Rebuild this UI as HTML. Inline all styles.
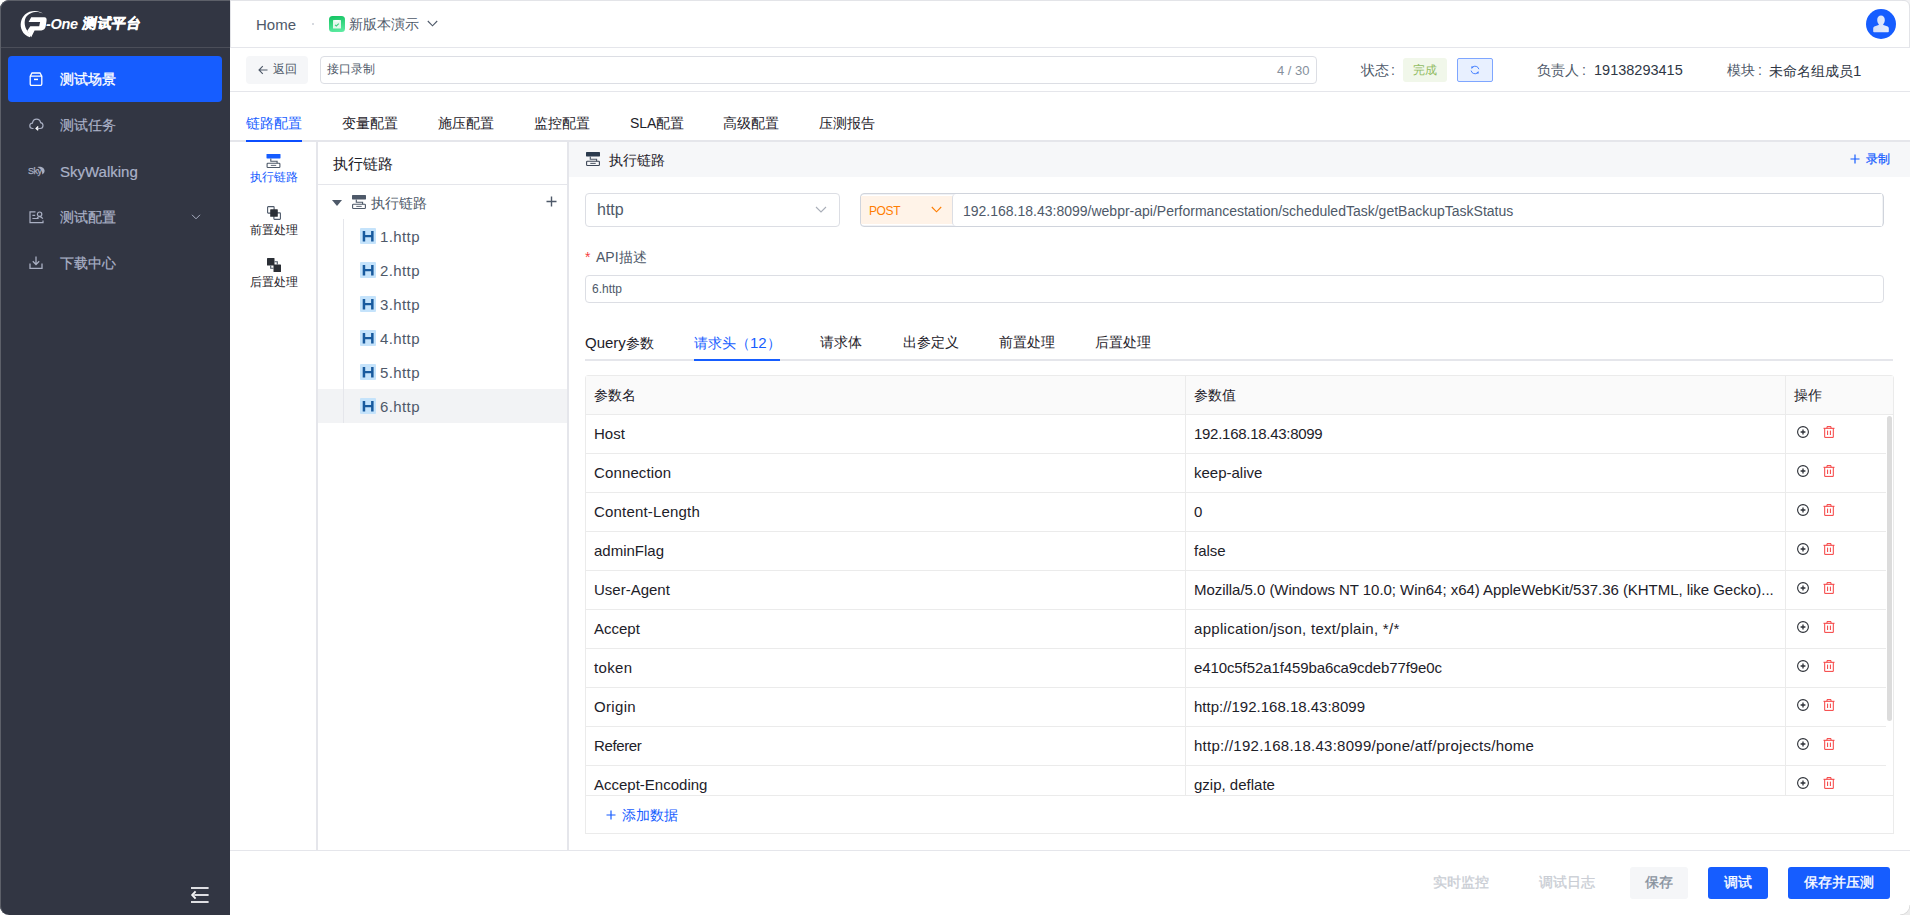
<!DOCTYPE html>
<html><head><meta charset="utf-8">
<style>
*{box-sizing:border-box;margin:0;padding:0}
html,body{width:1910px;height:915px;overflow:hidden;background:#fff;font-family:"Liberation Sans",sans-serif;}
.a{position:absolute}
.t{position:absolute;white-space:nowrap;line-height:1}
svg{position:absolute;overflow:visible}
/* sidebar */
#side{left:0;top:0;width:230px;height:915px;background:#323643;border-radius:9px 0 0 9px;}
#sideedge{left:0;top:0;width:230px;height:915px;border-top:1px solid #5d6069;border-left:1px solid #5d6069;border-radius:9px 0 0 9px;}
.mi{color:#abb2c8;font-size:14px;-webkit-text-stroke:0.2px currentColor}
/* borders */
.hl{position:absolute;height:1px;background:#e5e6eb}
.vl{position:absolute;width:1px;background:#e5e6eb}
</style></head><body>
<!-- ============ SIDEBAR ============ -->
<div id="side" class="a"></div>
<div id="sideedge" class="a"></div>
<div class="a" style="left:1px;top:47px;width:229px;height:1px;background:#4b4e59"></div>
<!-- logo -->
<svg style="left:17px;top:8px" width="33" height="32" viewBox="0 0 33 32">
  <path d="M25.9 5.4 C21.5 2.2 13 1.8 8 6.5 C3.6 10.5 2.6 17.5 5 22.5 C6.6 26 9.5 28.4 13 29.2 L14 26.2 C12.4 25.3 11.2 24.2 10.3 22.8 C7.6 19 6.8 13.5 8.8 9.5 C11.4 5.2 17.5 3.2 22.8 4.4 C24 4.6 25 5 25.9 5.4 Z" fill="#fff"/>
  <path d="M14.2 9.3 H27.3 Q30.2 9.5 29.5 13.2 L28.7 18.2 Q28 22.2 24.3 22.4 H17.6 L14.2 29.2 L10.3 22.8 L13.3 18.2 H22.2 L23.1 14 H11.6 Z" fill="#fff"/>
</svg>
<div id="logoOne" class="t" style="left:46px;top:17px;font-size:14.5px;font-weight:bold;font-style:italic;color:#fff;letter-spacing:-0.3px">-One</div>
<div id="logoCn" class="t" style="left:83px;top:16px;font-size:14px;font-weight:900;color:#fff;transform:skewX(-10deg);letter-spacing:0.5px;-webkit-text-stroke:0.5px #fff">测试平台</div>
<!-- active item -->
<div class="a" style="left:8px;top:56px;width:214px;height:46px;background:#165dff;border-radius:4px"></div>
<svg style="left:29px;top:72px" width="14" height="14" viewBox="0 0 14 14" fill="none" stroke="#fff" stroke-width="1.3">
  <path d="M1.2 4.2 L3 1 H11 L12.8 4.2 V12 Q12.8 13.3 11.5 13.3 H2.5 Q1.2 13.3 1.2 12 Z M1.2 4.2 H12.8"/>
  <path d="M5 7.4 H9" stroke-width="1.5"/>
</svg>
<div id="mi0" class="t mi" style="left:60px;top:72px;color:#fff;-webkit-text-stroke:0.35px #fff">测试场景</div>
<!-- item: 测试任务 -->
<svg style="left:29px;top:118px" width="15" height="13" viewBox="0 0 15 13" fill="none" stroke="#a9afc2" stroke-width="1.2">
  <path d="M4.5 10.5 H3.5 C1.8 10.5 0.8 9.3 0.8 7.8 C0.8 6.3 1.9 5.2 3.4 5.1 C3.9 2.6 5.5 1.2 7.6 1.2 C9.7 1.2 11.2 2.6 11.6 4.6 C13.1 4.8 14 6 14 7.6 C14 9.3 12.9 10.5 11.3 10.5 H8"/>
  <path d="M9.2 8.6 L7.2 10.5 L9.2 12.3" stroke="#fff" stroke-width="1.4"/>
</svg>
<div id="mi1" class="t mi" style="left:60px;top:118px">测试任务</div>
<!-- SkyWalking -->
<div class="t" style="left:28px;top:167px;font-size:9px;color:#a9afc2;letter-spacing:-0.5px;-webkit-text-stroke:0.25px #a9afc2">Sky</div>
<svg style="left:37px;top:165.5px" width="8" height="9" viewBox="0 0 8 9"><path d="M0.3 1.2 C3.5 -0.2 7.6 1.6 7.6 4.8 C7.6 6.5 6.6 7.8 5.2 8.4 C5.6 5.6 4 2.4 0.3 1.2Z" fill="#a9afc2"/></svg>
<div id="mi2" class="t mi" style="left:60px;top:164px;font-size:15px">SkyWalking</div>
<!-- 测试配置 -->
<svg style="left:29px;top:211px" width="15" height="13" viewBox="0 0 15 13" fill="none" stroke="#a9afc2" stroke-width="1.2">
  <path d="M6.5 0.8 H1 V11.6 H14 V9.6"/>
  <path d="M3.4 4.4 H6.2 M3.4 7.5 H9.6"/>
  <circle cx="10.6" cy="3.2" r="2.2"/>
  <path d="M8 7.4 C8.6 6.2 9.6 5.6 10.6 5.6 C11.8 5.6 12.8 6.3 13.8 7.6"/>
</svg>
<div id="mi3" class="t mi" style="left:60px;top:210px">测试配置</div>
<svg style="left:191px;top:214px" width="10" height="6" viewBox="0 0 10 6" fill="none" stroke="#a9afc2" stroke-width="1"><path d="M1 0.8 L5 4.8 L9 0.8"/></svg>
<!-- 下载中心 -->
<svg style="left:29px;top:256px" width="14" height="13" viewBox="0 0 14 13" fill="none" stroke="#a9afc2" stroke-width="1.3">
  <path d="M7 0.5 V8.5 M3.8 5.3 L7 8.5 L10.2 5.3"/>
  <path d="M1 7.5 V12.3 H13 V7.5"/>
</svg>
<div id="mi4" class="t mi" style="left:60px;top:256px">下载中心</div>
<!-- collapse icon -->
<svg style="left:191px;top:886px" width="18" height="17" viewBox="0 0 18 17" fill="none" stroke="#dedfe3" stroke-width="2">
  <path d="M0 2 H17.6 M3.2 9 H17.6 M0 16 H17.6"/>
  <path d="M4.6 5.4 L1.2 9 L4.6 12.6" stroke="#f4f4f6" stroke-width="1.9"/>
</svg>

<!-- ============ HEADER ============ -->
<div class="a" style="left:230px;top:0;width:1680px;height:1px;background:#e3e4e8"></div>
<div class="a" style="left:1909px;top:0;width:1px;height:48px;background:#e3e4e8"></div>
<div class="a" style="left:230px;top:0;width:1px;height:48px;background:#e3e4e8"></div>
<div class="a" style="left:230px;top:47px;width:1680px;height:1px;background:#e5e6eb"></div>
<div id="home" class="t" style="left:256px;top:17px;font-size:15px;color:#4e5969">Home</div>
<div class="a" style="left:312px;top:23px;width:2px;height:2px;border-radius:1px;background:#c9cdd4"></div>
<svg style="left:329px;top:16px" width="16" height="16" viewBox="0 0 16 16">
  <defs><linearGradient id="gg" x1="0.3" y1="0" x2="0.5" y2="1"><stop offset="0" stop-color="#15c463"/><stop offset="1" stop-color="#5beaa0"/></linearGradient></defs>
  <rect x="0" y="0" width="16" height="16" rx="3.5" fill="url(#gg)"/>
  <rect x="4" y="4" width="8" height="8.5" rx="0.5" fill="#e4f8ec"/>
  <rect x="5.5" y="4.2" width="5" height="1.4" rx="0.5" fill="#ffffff"/>
  <path d="M6 8.8 L7.3 10 L9.8 7.6" fill="none" stroke="#3bcf7f" stroke-width="1.1"/>
</svg>
<div id="proj" class="t" style="left:349px;top:17px;font-size:14px;color:#4e5969">新版本演示</div>
<svg style="left:427px;top:20px" width="11" height="7" viewBox="0 0 11 7" fill="none" stroke="#4e5969" stroke-width="1.1"><path d="M0.8 1 L5.5 5.8 L10.2 1"/></svg>
<!-- avatar -->
<svg style="left:1866px;top:9px" width="30" height="30" viewBox="0 0 30 30">
  <defs><linearGradient id="ag" x1="0" y1="0" x2="1" y2="0"><stop offset="0" stop-color="#d3def9"/><stop offset="1" stop-color="#e6edfd"/></linearGradient></defs>
  <circle cx="15" cy="15" r="15" fill="#165dff"/>
  <path d="M15 6.6 C12.8 6.6 11.2 8.4 11.2 11 C11.2 12.9 11.9 14.4 12.9 15.3 L12.6 16 L8.3 17.6 C7.6 17.9 7.2 18.5 7.2 19.2 V22.4 C7.2 22.9 7.6 23.2 8 23.2 H22 C22.4 23.2 22.8 22.9 22.8 22.4 V19.2 C22.8 18.5 22.4 17.9 21.7 17.6 L17.4 16 L17.1 15.3 C18.1 14.4 18.8 12.9 18.8 11 C18.8 8.4 17.2 6.6 15 6.6 Z" fill="url(#ag)"/>
</svg>
<!-- ============ ROW 2 ============ -->
<div class="a" style="left:246px;top:56px;width:62px;height:28px;background:#f5f6f8;border-radius:4px"></div>
<svg style="left:258px;top:65px" width="10" height="10" viewBox="0 0 10 10" fill="none" stroke="#4e5969" stroke-width="1.1"><path d="M9.5 5 H1 M4.8 1.2 L1 5 L4.8 8.8"/></svg>
<div id="back" class="t" style="left:273px;top:63px;font-size:12px;color:#4e5969">返回</div>
<div class="a" style="left:320px;top:56px;width:997px;height:28px;border:1px solid #dcdee4;border-radius:4px"></div>
<div id="inp1" class="t" style="left:327px;top:63px;font-size:12px;color:#4e5969">接口录制</div>
<div id="cnt" class="t" style="left:1277px;top:64px;font-size:13px;color:#86909c">4 / 30</div>
<div id="state" class="t" style="left:1361px;top:63px;font-size:14px;color:#4e5969">状态<span style="margin-left:2px">:</span></div>
<div class="a" style="left:1403px;top:58px;width:44px;height:24px;background:#f1f7ea;border-radius:3px"></div>
<div id="done" class="t" style="left:1413px;top:64px;font-size:12px;color:#91bc63">完成</div>
<div class="a" style="left:1457px;top:58px;width:36px;height:24px;background:#e8f0ff;border:1px solid #7ea6ff;border-radius:2px"></div>
<svg style="left:1470px;top:65px" width="10" height="10" viewBox="0 0 10 10" fill="none" stroke="#3a78ff" stroke-width="0.9">
  <path d="M2.4 2.3 A3.9 3.9 0 0 1 8.9 4.2"/><path d="M1.1 5.6 A3.9 3.9 0 0 0 7.6 7.7"/>
  <path d="M1.2 1.4 L3.8 1.6 L1.6 4 Z" fill="#3a78ff" stroke="none"/><path d="M8.8 8.6 L6.2 8.4 L8.4 6 Z" fill="#3a78ff" stroke="none"/>
</svg>
<div id="owner" class="t" style="left:1537px;top:63px;font-size:14px;color:#4e5969">负责人<span style="margin-left:3px">:</span></div>
<div id="ownerv" class="t" style="left:1594px;top:63px;font-size:14.5px;color:#2f3745">19138293415</div>
<div id="mod" class="t" style="left:1727px;top:63px;font-size:14px;color:#4e5969">模块<span style="margin-left:3px">:</span></div>
<div id="modv" class="t" style="left:1769px;top:63px;font-size:14px;color:#2f3745">未命名组成员<span style="font-size:15px">1</span></div>
<div class="a" style="left:230px;top:91px;width:1680px;height:1px;background:#e5e6eb"></div>
<!-- ============ TABS ============ -->
<div class="a" style="left:230px;top:140px;width:1680px;height:2px;background:#e5e6eb"></div>
<div class="a" style="left:246px;top:140px;width:56px;height:2px;background:#0b4dff"></div>
<div id="tab0" class="t" style="left:246px;top:116px;font-size:14px;color:#165dff">链路配置</div>
<div id="tab1" class="t" style="left:342px;top:116px;font-size:14px;color:#1d2129">变量配置</div>
<div id="tab2" class="t" style="left:438px;top:116px;font-size:14px;color:#1d2129">施压配置</div>
<div id="tab3" class="t" style="left:534px;top:116px;font-size:14px;color:#1d2129">监控配置</div>
<div id="tab4" class="t" style="left:630px;top:116px;font-size:14px;color:#1d2129">SLA配置</div>
<div id="tab5" class="t" style="left:723px;top:116px;font-size:14px;color:#1d2129">高级配置</div>
<div id="tab6" class="t" style="left:819px;top:116px;font-size:14px;color:#1d2129">压测报告</div>

<!-- ============ LEFT ICON COLUMN ============ -->
<div class="a" style="left:316px;top:142px;width:2px;height:709px;background:#e5e6eb"></div>
<svg style="left:266px;top:154px" width="15" height="14" viewBox="0 0 14 14">
  <rect x="0" y="0" width="14" height="4.4" rx="0.6" fill="#165dff"/>
  <path d="M4.3 4.4 V7.3 H10.6 V9.3" fill="none" stroke="#4e5969" stroke-width="1.1"/>
  <rect x="0.6" y="9.3" width="12.8" height="4.2" rx="0.8" fill="none" stroke="#4e5969" stroke-width="1.1"/>
  <path d="M4.3 11.4 H9.7" stroke="#4e5969" stroke-width="0.9"/>
</svg>
<div id="lc0" class="t" style="left:250px;top:171px;font-size:12px;color:#165dff">执行链路</div>
<svg style="left:267px;top:206px" width="14" height="14" viewBox="0 0 14 14">
  <rect x="0.6" y="0.6" width="6.5" height="6.5" rx="0.6" fill="none" stroke="#4e5969" stroke-width="1.1"/>
  <rect x="6.9" y="6.9" width="6.5" height="6.5" rx="0.6" fill="none" stroke="#4e5969" stroke-width="1.1"/>
  <rect x="3.2" y="3.2" width="7.6" height="7.6" rx="0.6" fill="#2b2f36"/>
</svg>
<div id="lc1" class="t" style="left:250px;top:224px;font-size:12px;color:#1d2129">前置处理</div>
<svg style="left:267px;top:258px" width="14" height="14" viewBox="0 0 14 14">
  <rect x="0" y="0" width="7.5" height="7.5" rx="0.6" fill="#2b2f36"/>
  <path d="M3.7 7.5 V10.3 H6.5" fill="none" stroke="#4e5969" stroke-width="1.1"/>
  <path d="M7.5 3.7 H10.3 V6.5" fill="none" stroke="#4e5969" stroke-width="1.1"/>
  <rect x="6.5" y="6.5" width="7.5" height="7.5" rx="0.6" fill="#2b2f36"/>
</svg>
<div id="lc2" class="t" style="left:250px;top:276px;font-size:12px;color:#1d2129">后置处理</div>
<!-- ============ TREE ============ -->
<div class="a" style="left:567px;top:142px;width:2px;height:709px;background:#e5e6eb"></div>
<div class="a" style="left:318px;top:184px;width:249px;height:1px;background:#e5e6eb"></div>
<div id="trh" class="t" style="left:333px;top:156px;font-size:15px;color:#1d2129">执行链路</div>
<svg style="left:332px;top:200px" width="10" height="6" viewBox="0 0 10 6"><path d="M0 0 H10 L5 6 Z" fill="#4e5969"/></svg>
<svg style="left:352px;top:195px" width="14" height="14" viewBox="0 0 14 14">
  <rect x="0" y="0" width="14" height="4.4" rx="0.6" fill="#4e5969"/>
  <path d="M4.3 4.4 V7.3 H10.6 V9.3" fill="none" stroke="#4e5969" stroke-width="1.1"/>
  <rect x="0.6" y="9.3" width="12.8" height="4.2" rx="0.8" fill="none" stroke="#4e5969" stroke-width="1.1"/>
  <path d="M4.3 11.4 H9.7" stroke="#4e5969" stroke-width="0.9"/>
</svg>
<div id="trr" class="t" style="left:371px;top:196px;font-size:14px;color:#4e5969">执行链路</div>
<svg style="left:546px;top:196px" width="11" height="11" viewBox="0 0 11 11" fill="none" stroke="#4e5969" stroke-width="1.4"><path d="M5.5 0.5 V10.5 M0.5 5.5 H10.5"/></svg>
<div class="a" style="left:318px;top:389px;width:249px;height:34px;background:#f2f3f5"></div>
<div class="a" style="left:343px;top:219px;width:1px;height:204px;background:#e5e6eb"></div>
<div class="a" style="left:360px;top:228px;width:16px;height:16px;background:#c5e3fb;border-radius:1px"></div>
<svg style="left:360px;top:228px" width="16" height="16" viewBox="0 0 16 16"><path d="M2.7 3 H5.2 V7.1 H11.1 V3 H13.6 V13.4 H11.1 V9.3 H5.2 V13.4 H2.7 Z" fill="#185a9e"/></svg>
<div id="tri0" class="t" style="letter-spacing:0.4px;left:380px;top:229px;font-size:15px;color:#4e5969">1.http</div>
<div class="a" style="left:360px;top:262px;width:16px;height:16px;background:#c5e3fb;border-radius:1px"></div>
<svg style="left:360px;top:262px" width="16" height="16" viewBox="0 0 16 16"><path d="M2.7 3 H5.2 V7.1 H11.1 V3 H13.6 V13.4 H11.1 V9.3 H5.2 V13.4 H2.7 Z" fill="#185a9e"/></svg>
<div id="tri1" class="t" style="letter-spacing:0.4px;left:380px;top:263px;font-size:15px;color:#4e5969">2.http</div>
<div class="a" style="left:360px;top:296px;width:16px;height:16px;background:#c5e3fb;border-radius:1px"></div>
<svg style="left:360px;top:296px" width="16" height="16" viewBox="0 0 16 16"><path d="M2.7 3 H5.2 V7.1 H11.1 V3 H13.6 V13.4 H11.1 V9.3 H5.2 V13.4 H2.7 Z" fill="#185a9e"/></svg>
<div id="tri2" class="t" style="letter-spacing:0.4px;left:380px;top:297px;font-size:15px;color:#4e5969">3.http</div>
<div class="a" style="left:360px;top:330px;width:16px;height:16px;background:#c5e3fb;border-radius:1px"></div>
<svg style="left:360px;top:330px" width="16" height="16" viewBox="0 0 16 16"><path d="M2.7 3 H5.2 V7.1 H11.1 V3 H13.6 V13.4 H11.1 V9.3 H5.2 V13.4 H2.7 Z" fill="#185a9e"/></svg>
<div id="tri3" class="t" style="letter-spacing:0.4px;left:380px;top:331px;font-size:15px;color:#4e5969">4.http</div>
<div class="a" style="left:360px;top:364px;width:16px;height:16px;background:#c5e3fb;border-radius:1px"></div>
<svg style="left:360px;top:364px" width="16" height="16" viewBox="0 0 16 16"><path d="M2.7 3 H5.2 V7.1 H11.1 V3 H13.6 V13.4 H11.1 V9.3 H5.2 V13.4 H2.7 Z" fill="#185a9e"/></svg>
<div id="tri4" class="t" style="letter-spacing:0.4px;left:380px;top:365px;font-size:15px;color:#4e5969">5.http</div>
<div class="a" style="left:360px;top:398px;width:16px;height:16px;background:#c5e3fb;border-radius:1px"></div>
<svg style="left:360px;top:398px" width="16" height="16" viewBox="0 0 16 16"><path d="M2.7 3 H5.2 V7.1 H11.1 V3 H13.6 V13.4 H11.1 V9.3 H5.2 V13.4 H2.7 Z" fill="#185a9e"/></svg>
<div id="tri5" class="t" style="letter-spacing:0.4px;left:380px;top:399px;font-size:15px;color:#4e5969">6.http</div>

<!-- ============ MAIN PANEL ============ -->
<div class="a" style="left:569px;top:142px;width:1341px;height:35px;background:#f6f7f9"></div>
<svg style="left:586px;top:152px" width="14" height="14" viewBox="0 0 14 14">
  <rect x="0" y="0" width="14" height="4.4" rx="0.6" fill="#2c3b4e"/>
  <path d="M4.3 4.4 V7.3 H10.6 V9.3" fill="none" stroke="#4b5666" stroke-width="1.1"/>
  <rect x="0.6" y="9.3" width="12.8" height="4.2" rx="0.8" fill="none" stroke="#3c4656" stroke-width="1.1"/>
  <path d="M4.3 11.4 H9.7" stroke="#3c4656" stroke-width="0.9"/>
</svg>
<div id="mh" class="t" style="left:609px;top:153px;font-size:14px;color:#1d2129">执行链路</div>
<svg style="left:1850px;top:154px" width="10" height="10" viewBox="0 0 10 10" fill="none" stroke="#165dff" stroke-width="1.2"><path d="M5 0.5 V9.5 M0.5 5 H9.5"/></svg>
<div id="rec" class="t" style="left:1866px;top:153px;font-size:12px;color:#165dff;-webkit-text-stroke:0.25px #165dff">录制</div>
<!-- http select -->
<div class="a" style="left:585px;top:193px;width:255px;height:34px;border:1px solid #dcdee4;border-radius:4px"></div>
<div id="http" class="t" style="left:597px;top:202px;font-size:16px;color:#4e5969">http</div>
<svg style="left:815px;top:206px" width="12" height="7" viewBox="0 0 12 7" fill="none" stroke="#a9aeb8" stroke-width="1.1"><path d="M1 1 L6 6 L11 1"/></svg>
<!-- method + url -->
<div class="a" style="left:860px;top:193px;width:1024px;height:34px;border:1px solid #d0d4dc;border-radius:4px;box-shadow:inset 0 0 0 0.5px #e3e6eb"></div>
<div class="a" style="left:861px;top:196px;width:92px;height:28px;background:#fff3e8"></div>
<div id="post" class="t" style="left:869px;top:205px;font-size:12px;color:#ff7d00;letter-spacing:-0.4px">POST</div>
<svg style="left:931px;top:206px" width="11" height="7" viewBox="0 0 11 7" fill="none" stroke="#ff7d00" stroke-width="1.1"><path d="M0.8 1 L5.5 5.8 L10.2 1"/></svg>
<div class="a" style="left:952px;top:194px;width:930px;height:32px;border-left:1px solid #dcdee4;border-radius:4px 0 0 4px;background:#fff"></div>
<div id="url" class="t" style="left:963px;top:204px;font-size:14px;color:#4e5969">192.168.18.43:8099/webpr-api/Performancestation/scheduledTask/getBackupTaskStatus</div>
<!-- API描述 -->
<div id="star" class="t" style="left:585px;top:250px;font-size:14px;color:#f53f3f">*</div>
<div id="apil" class="t" style="left:596px;top:250px;font-size:14px;color:#4e5969">API描述</div>
<div class="a" style="left:585px;top:275px;width:1299px;height:28px;border:1px solid #dcdee4;border-radius:4px"></div>
<div id="apiv" class="t" style="left:592px;top:283px;font-size:12px;color:#4e5969">6.http</div>
<!-- sub tabs -->
<div class="a" style="left:585px;top:359px;width:1308px;height:2px;background:#e5e6eb"></div>
<div class="a" style="left:694px;top:359px;width:86px;height:2px;background:#165dff"></div>
<div id="st0" class="t" style="left:585px;top:335px;font-size:14px;color:#1d2129"><span style="font-size:15px">Query</span>参数</div>
<div id="st1" class="t" style="left:694px;top:335px;font-size:14px;color:#165dff">请求头（<span style="font-size:15px">12</span>）</div>
<div id="st2" class="t" style="left:820px;top:335px;font-size:14px;color:#1d2129">请求体</div>
<div id="st3" class="t" style="left:903px;top:335px;font-size:14px;color:#1d2129">出参定义</div>
<div id="st4" class="t" style="left:999px;top:335px;font-size:14px;color:#1d2129">前置处理</div>
<div id="st5" class="t" style="left:1095px;top:335px;font-size:14px;color:#1d2129">后置处理</div>

<!-- ============ TABLE ============ -->
<div class="a" style="left:585px;top:375px;width:1309px;height:459px;border:1px solid #ebebeb;border-radius:3px 3px 0 0"></div>
<div class="a" style="left:586px;top:376px;width:1307px;height:38px;background:#fafafa"></div>
<div class="a" style="left:586px;top:414px;width:1307px;height:1px;background:#ebebeb"></div>
<div class="a" style="left:1185px;top:376px;width:1px;height:419px;background:#ebebeb"></div>
<div class="a" style="left:1785px;top:376px;width:1px;height:419px;background:#ebebeb"></div>
<div class="a" style="left:586px;top:795px;width:1307px;height:1px;background:#ebebeb"></div>
<div id="th0" class="t" style="left:594px;top:388px;font-size:14px;color:#1d2129">参数名</div>
<div id="th1" class="t" style="left:1194px;top:388px;font-size:14px;color:#1d2129">参数值</div>
<div id="th2" class="t" style="left:1794px;top:388px;font-size:14px;color:#1d2129">操作</div>
<div class="a" style="left:1887px;top:416px;width:5px;height:305px;border-radius:3px;background:#dcdcdc"></div>
<div class="a" style="left:586px;top:453px;width:1300px;height:1px;background:#ebebeb"></div>
<div id="rk0" class="t" style="left:594px;top:426px;font-size:15px;color:#1d2129">Host</div>
<div id="rv0" class="t" style="letter-spacing:-0.28px;left:1194px;top:426px;font-size:15px;color:#1d2129">192.168.18.43:8099</div>
<svg style="left:1797px;top:426px" width="12" height="12" viewBox="0 0 12 12"><circle cx="6" cy="6" r="5.4" fill="none" stroke="#2b2f36" stroke-width="1.1"/><path d="M6 3.6 V8.4 M3.6 6 H8.4" stroke="#2b2f36" stroke-width="1.3"/></svg>
<svg style="left:1823px;top:426px" width="12" height="12" viewBox="0 0 12 12" fill="none" stroke="#f53f3f" stroke-width="1"><path d="M0.5 2.3 H11.5 M4 2.3 V0.6 H8 V2.3 M1.7 2.3 V11.4 H10.3 V2.3 M4.6 4.6 V9 M7.4 4.6 V9"/></svg>
<div class="a" style="left:586px;top:492px;width:1300px;height:1px;background:#ebebeb"></div>
<div id="rk1" class="t" style="letter-spacing:0.13px;left:594px;top:465px;font-size:15px;color:#1d2129">Connection</div>
<div id="rv1" class="t" style="left:1194px;top:465px;font-size:15px;color:#1d2129">keep-alive</div>
<svg style="left:1797px;top:465px" width="12" height="12" viewBox="0 0 12 12"><circle cx="6" cy="6" r="5.4" fill="none" stroke="#2b2f36" stroke-width="1.1"/><path d="M6 3.6 V8.4 M3.6 6 H8.4" stroke="#2b2f36" stroke-width="1.3"/></svg>
<svg style="left:1823px;top:465px" width="12" height="12" viewBox="0 0 12 12" fill="none" stroke="#f53f3f" stroke-width="1"><path d="M0.5 2.3 H11.5 M4 2.3 V0.6 H8 V2.3 M1.7 2.3 V11.4 H10.3 V2.3 M4.6 4.6 V9 M7.4 4.6 V9"/></svg>
<div class="a" style="left:586px;top:531px;width:1300px;height:1px;background:#ebebeb"></div>
<div id="rk2" class="t" style="letter-spacing:0.18px;left:594px;top:504px;font-size:15px;color:#1d2129">Content-Length</div>
<div id="rv2" class="t" style="left:1194px;top:504px;font-size:15px;color:#1d2129">0</div>
<svg style="left:1797px;top:504px" width="12" height="12" viewBox="0 0 12 12"><circle cx="6" cy="6" r="5.4" fill="none" stroke="#2b2f36" stroke-width="1.1"/><path d="M6 3.6 V8.4 M3.6 6 H8.4" stroke="#2b2f36" stroke-width="1.3"/></svg>
<svg style="left:1823px;top:504px" width="12" height="12" viewBox="0 0 12 12" fill="none" stroke="#f53f3f" stroke-width="1"><path d="M0.5 2.3 H11.5 M4 2.3 V0.6 H8 V2.3 M1.7 2.3 V11.4 H10.3 V2.3 M4.6 4.6 V9 M7.4 4.6 V9"/></svg>
<div class="a" style="left:586px;top:570px;width:1300px;height:1px;background:#ebebeb"></div>
<div id="rk3" class="t" style="left:594px;top:543px;font-size:15px;color:#1d2129">adminFlag</div>
<div id="rv3" class="t" style="left:1194px;top:543px;font-size:15px;color:#1d2129">false</div>
<svg style="left:1797px;top:543px" width="12" height="12" viewBox="0 0 12 12"><circle cx="6" cy="6" r="5.4" fill="none" stroke="#2b2f36" stroke-width="1.1"/><path d="M6 3.6 V8.4 M3.6 6 H8.4" stroke="#2b2f36" stroke-width="1.3"/></svg>
<svg style="left:1823px;top:543px" width="12" height="12" viewBox="0 0 12 12" fill="none" stroke="#f53f3f" stroke-width="1"><path d="M0.5 2.3 H11.5 M4 2.3 V0.6 H8 V2.3 M1.7 2.3 V11.4 H10.3 V2.3 M4.6 4.6 V9 M7.4 4.6 V9"/></svg>
<div class="a" style="left:586px;top:609px;width:1300px;height:1px;background:#ebebeb"></div>
<div id="rk4" class="t" style="left:594px;top:582px;font-size:15px;color:#1d2129">User-Agent</div>
<div id="rv4" class="t" style="letter-spacing:-0.04px;left:1194px;top:582px;font-size:15px;color:#1d2129">Mozilla/5.0 (Windows NT 10.0; Win64; x64) AppleWebKit/537.36 (KHTML, like Gecko)...</div>
<svg style="left:1797px;top:582px" width="12" height="12" viewBox="0 0 12 12"><circle cx="6" cy="6" r="5.4" fill="none" stroke="#2b2f36" stroke-width="1.1"/><path d="M6 3.6 V8.4 M3.6 6 H8.4" stroke="#2b2f36" stroke-width="1.3"/></svg>
<svg style="left:1823px;top:582px" width="12" height="12" viewBox="0 0 12 12" fill="none" stroke="#f53f3f" stroke-width="1"><path d="M0.5 2.3 H11.5 M4 2.3 V0.6 H8 V2.3 M1.7 2.3 V11.4 H10.3 V2.3 M4.6 4.6 V9 M7.4 4.6 V9"/></svg>
<div class="a" style="left:586px;top:648px;width:1300px;height:1px;background:#ebebeb"></div>
<div id="rk5" class="t" style="left:594px;top:621px;font-size:15px;color:#1d2129">Accept</div>
<div id="rv5" class="t" style="letter-spacing:0.29px;left:1194px;top:621px;font-size:15px;color:#1d2129">application/json, text/plain, */*</div>
<svg style="left:1797px;top:621px" width="12" height="12" viewBox="0 0 12 12"><circle cx="6" cy="6" r="5.4" fill="none" stroke="#2b2f36" stroke-width="1.1"/><path d="M6 3.6 V8.4 M3.6 6 H8.4" stroke="#2b2f36" stroke-width="1.3"/></svg>
<svg style="left:1823px;top:621px" width="12" height="12" viewBox="0 0 12 12" fill="none" stroke="#f53f3f" stroke-width="1"><path d="M0.5 2.3 H11.5 M4 2.3 V0.6 H8 V2.3 M1.7 2.3 V11.4 H10.3 V2.3 M4.6 4.6 V9 M7.4 4.6 V9"/></svg>
<div class="a" style="left:586px;top:687px;width:1300px;height:1px;background:#ebebeb"></div>
<div id="rk6" class="t" style="letter-spacing:0.33px;left:594px;top:660px;font-size:15px;color:#1d2129">token</div>
<div id="rv6" class="t" style="letter-spacing:-0.1px;left:1194px;top:660px;font-size:15px;color:#1d2129">e410c5f52a1f459ba6ca9cdeb77f9e0c</div>
<svg style="left:1797px;top:660px" width="12" height="12" viewBox="0 0 12 12"><circle cx="6" cy="6" r="5.4" fill="none" stroke="#2b2f36" stroke-width="1.1"/><path d="M6 3.6 V8.4 M3.6 6 H8.4" stroke="#2b2f36" stroke-width="1.3"/></svg>
<svg style="left:1823px;top:660px" width="12" height="12" viewBox="0 0 12 12" fill="none" stroke="#f53f3f" stroke-width="1"><path d="M0.5 2.3 H11.5 M4 2.3 V0.6 H8 V2.3 M1.7 2.3 V11.4 H10.3 V2.3 M4.6 4.6 V9 M7.4 4.6 V9"/></svg>
<div class="a" style="left:586px;top:726px;width:1300px;height:1px;background:#ebebeb"></div>
<div id="rk7" class="t" style="letter-spacing:0.34px;left:594px;top:699px;font-size:15px;color:#1d2129">Origin</div>
<div id="rv7" class="t" style="left:1194px;top:699px;font-size:15px;color:#1d2129">http://192.168.18.43:8099</div>
<svg style="left:1797px;top:699px" width="12" height="12" viewBox="0 0 12 12"><circle cx="6" cy="6" r="5.4" fill="none" stroke="#2b2f36" stroke-width="1.1"/><path d="M6 3.6 V8.4 M3.6 6 H8.4" stroke="#2b2f36" stroke-width="1.3"/></svg>
<svg style="left:1823px;top:699px" width="12" height="12" viewBox="0 0 12 12" fill="none" stroke="#f53f3f" stroke-width="1"><path d="M0.5 2.3 H11.5 M4 2.3 V0.6 H8 V2.3 M1.7 2.3 V11.4 H10.3 V2.3 M4.6 4.6 V9 M7.4 4.6 V9"/></svg>
<div class="a" style="left:586px;top:765px;width:1300px;height:1px;background:#ebebeb"></div>
<div id="rk8" class="t" style="letter-spacing:-0.37px;left:594px;top:738px;font-size:15px;color:#1d2129">Referer</div>
<div id="rv8" class="t" style="letter-spacing:0.26px;left:1194px;top:738px;font-size:15px;color:#1d2129">http://192.168.18.43:8099/pone/atf/projects/home</div>
<svg style="left:1797px;top:738px" width="12" height="12" viewBox="0 0 12 12"><circle cx="6" cy="6" r="5.4" fill="none" stroke="#2b2f36" stroke-width="1.1"/><path d="M6 3.6 V8.4 M3.6 6 H8.4" stroke="#2b2f36" stroke-width="1.3"/></svg>
<svg style="left:1823px;top:738px" width="12" height="12" viewBox="0 0 12 12" fill="none" stroke="#f53f3f" stroke-width="1"><path d="M0.5 2.3 H11.5 M4 2.3 V0.6 H8 V2.3 M1.7 2.3 V11.4 H10.3 V2.3 M4.6 4.6 V9 M7.4 4.6 V9"/></svg>
<div id="rk9" class="t" style="left:594px;top:777px;font-size:15px;color:#1d2129">Accept-Encoding</div>
<div id="rv9" class="t" style="left:1194px;top:777px;font-size:15px;color:#1d2129">gzip, deflate</div>
<svg style="left:1797px;top:777px" width="12" height="12" viewBox="0 0 12 12"><circle cx="6" cy="6" r="5.4" fill="none" stroke="#2b2f36" stroke-width="1.1"/><path d="M6 3.6 V8.4 M3.6 6 H8.4" stroke="#2b2f36" stroke-width="1.3"/></svg>
<svg style="left:1823px;top:777px" width="12" height="12" viewBox="0 0 12 12" fill="none" stroke="#f53f3f" stroke-width="1"><path d="M0.5 2.3 H11.5 M4 2.3 V0.6 H8 V2.3 M1.7 2.3 V11.4 H10.3 V2.3 M4.6 4.6 V9 M7.4 4.6 V9"/></svg>
<div class="a" style="left:586px;top:796px;width:1307px;height:40px;background:#fff"></div>
<div class="a" style="left:585px;top:795px;width:1309px;height:39px;border:1px solid #ebebeb;border-top:1px solid #ebebeb"></div>
<svg style="left:606px;top:810px" width="10" height="10" viewBox="0 0 10 10" fill="none" stroke="#165dff" stroke-width="1.2"><path d="M5 0.5 V9.5 M0.5 5 H9.5"/></svg>
<div id="add" class="t" style="left:622px;top:808px;font-size:14px;color:#165dff">添加数据</div>
<!-- ============ FOOTER ============ -->
<div class="a" style="left:230px;top:850px;width:1680px;height:1px;background:#e5e6eb"></div>
<div id="f0" class="t" style="left:1433px;top:875px;font-size:14px;color:#c9cdd4;font-weight:500;-webkit-text-stroke:0.3px #c9cdd4">实时监控</div>
<div id="f1" class="t" style="left:1539px;top:875px;font-size:14px;color:#c9cdd4;font-weight:500;-webkit-text-stroke:0.3px #c9cdd4">调试日志</div>
<div class="a" style="left:1630px;top:867px;width:58px;height:32px;background:#f5f6f8;border-radius:3px"></div>
<div id="f2" class="t" style="left:1645px;top:875px;font-size:14px;color:#86909c;font-weight:500;-webkit-text-stroke:0.35px #86909c">保存</div>
<div class="a" style="left:1708px;top:867px;width:60px;height:32px;background:#165dff;border-radius:3px"></div>
<div id="f3" class="t" style="left:1724px;top:875px;font-size:14px;color:#fff;font-weight:500;-webkit-text-stroke:0.35px #fff">调试</div>
<div class="a" style="left:1788px;top:867px;width:102px;height:32px;background:#165dff;border-radius:3px"></div>
<div id="f4" class="t" style="left:1804px;top:875px;font-size:14px;color:#fff;font-weight:500;-webkit-text-stroke:0.35px #fff">保存并压测</div>
<svg style="left:1898px;top:903px" width="12" height="12" viewBox="0 0 12 12"><path d="M12 0 V12 H0 H2 A10 10 0 0 0 12 2 Z" fill="#ececec"/><path d="M2 12 A10 10 0 0 0 12 2" fill="none" stroke="#dcdcdc" stroke-width="1"/></svg>
<svg style="left:1902px;top:0px" width="8" height="8" viewBox="0 0 8 8"><path d="M0 0 H8 V8 V8 H7.5 V6 A5.5 5.5 0 0 0 2 0.5 H0 Z" fill="#f2f2f4"/><path d="M0 0.5 H2 A5.5 5.5 0 0 1 7.5 6 V8" fill="none" stroke="#e0e1e5" stroke-width="1"/></svg>
</body></html>
